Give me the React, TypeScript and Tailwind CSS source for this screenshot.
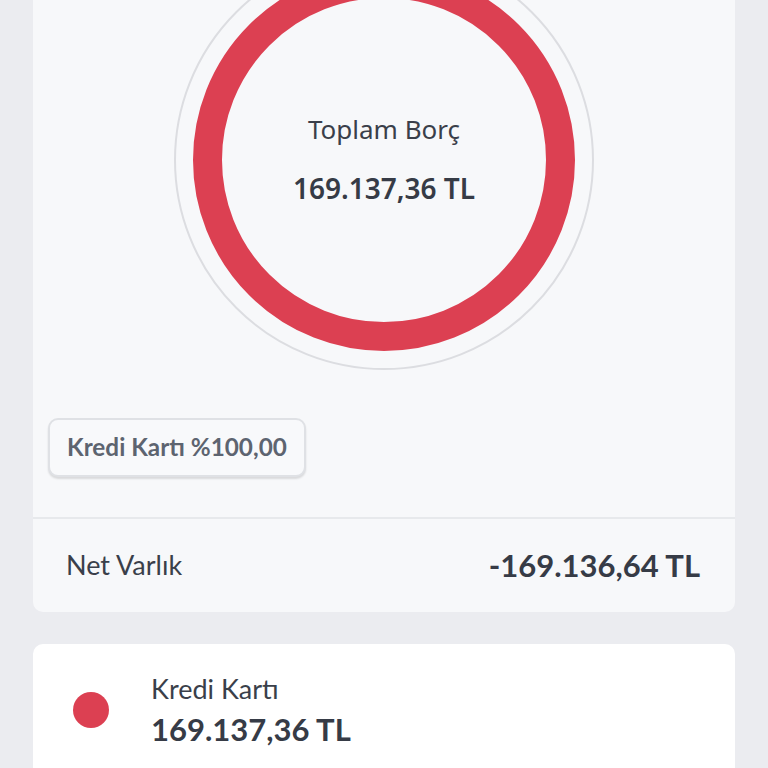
export default function App() {
  const lato = { fontFamily: 'Lato, "Noto Sans", sans-serif' };
  const noto = { fontFamily: '"Noto Sans", sans-serif' };
  return (
    <div className="h-[768px] overflow-hidden bg-[#ebecf0] px-[33px]" style={lato}>
      <div className="-mt-[70px] flex flex-col gap-[32px]">
        {/* summary card */}
        <div className="rounded-[10px] bg-[#f7f8fa]">
          <div className="flex justify-center pt-[20px]">
            <div className="relative h-[420px] w-[420px]">
              <svg width="420" height="420" viewBox="0 0 420 420">
                <circle cx="210" cy="210" r="209" fill="none" stroke="#dcdde1" strokeWidth="2" />
                <circle cx="210" cy="210" r="176.5" fill="none" stroke="#dc4052" strokeWidth="29" />
              </svg>
              <div className="absolute inset-0 flex flex-col items-center justify-center gap-[32px] pb-[2px]">
                <span className="text-[26px] leading-none text-[#3a3f4a]" style={noto}>
                  Toplam Borç
                </span>
                <span className="text-[28px] font-semibold leading-none text-[#363b46]" style={noto}>
                  169.137,36 TL
                </span>
              </div>
            </div>
          </div>
          <div className="px-[15px] pt-[48px] pb-[40px]">
            <div className="inline-flex h-[59px] items-center rounded-[10px] border-2 border-[#dfe1e5] bg-[#f8f9fb] px-[17px] text-[24.3px] font-bold text-[#5d6470] shadow-[0_2px_2px_rgba(0,0,0,0.12)]">
              Kredi Kartı %100,00
            </div>
          </div>
          <div className="flex h-[95px] items-center justify-between border-t-2 border-[#e7e9ec] pl-[33px] pr-[35px]">
            <span className="text-[27px] text-[#3a3f4a]">Net Varlık</span>
            <span className="text-[31px] font-bold text-[#363b46]">-169.136,64 TL</span>
          </div>
        </div>

        {/* category card */}
        <div className="flex items-center rounded-[10px] bg-white pt-[28px] pb-[40px] pl-[40px]">
          <div className="h-[36px] w-[36px] rounded-full bg-[#dc4052]" />
          <div className="ml-[42px] flex flex-col gap-[4px]">
            <span className="text-[27px] leading-tight text-[#3a3f4a]">Kredi Kartı</span>
            <span className="text-[31px] font-bold leading-tight text-[#363b46]">169.137,36 TL</span>
          </div>
        </div>
      </div>
    </div>
  );
}
